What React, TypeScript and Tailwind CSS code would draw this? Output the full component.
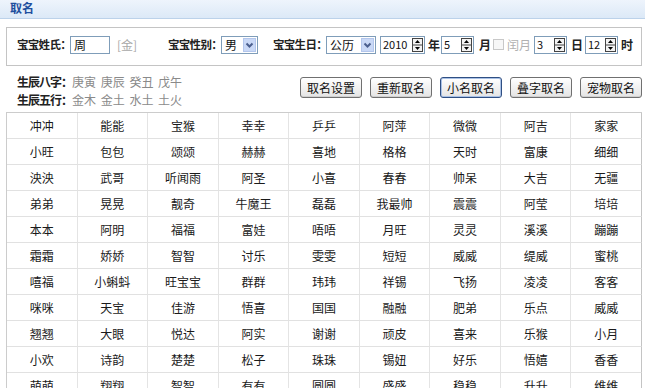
import React from "react";

const rows: string[][] = [
  ["冲冲", "能能", "宝猴", "幸幸", "乒乒", "阿萍", "微微", "阿吉", "家家"],
  ["小旺", "包包", "颂颂", "赫赫", "喜地", "格格", "天时", "富康", "细细"],
  ["泱泱", "武哥", "听闻雨", "阿圣", "小喜", "春春", "帅呆", "大吉", "无疆"],
  ["弟弟", "晃晃", "靓奇", "牛魔王", "磊磊", "我最帅", "震震", "阿莹", "培培"],
  ["本本", "阿明", "福福", "富娃", "唔唔", "月旺", "灵灵", "溪溪", "蹦蹦"],
  ["霜霜", "娇娇", "智智", "讨乐", "雯雯", "短短", "威威", "缇威", "蜜桃"],
  ["嘻福", "小蝌蚪", "旺宝宝", "群群", "玮玮", "祥锡", "飞扬", "凌凌", "客客"],
  ["咪咪", "天宝", "佳游", "悟喜", "国国", "融融", "肥弟", "乐点", "威威"],
  ["翘翘", "大眼", "悦达", "阿实", "谢谢", "顽皮", "喜来", "乐猴", "小月"],
  ["小欢", "诗韵", "楚楚", "松子", "珠珠", "锡妞", "好乐", "悟嬉", "香香"],
  ["萌萌", "翔翔", "智智", "有有", "圆圆", "盛盛", "稳稳", "升升", "维维"],
];

const font = { fontFamily: '"Noto Sans CJK SC", "Noto Sans", sans-serif' };

function Spinner() {
  return (
    <svg width="11" height="14" viewBox="0 0 11 14" className="shrink-0">
      <rect x="0.5" y="0.5" width="10" height="13" fill="#f3f3f3" stroke="#444" />
      <line x1="1" y1="7" x2="10" y2="7" stroke="#444" />
      <path d="M5.5 2 L8 5 H3 Z" fill="#000" />
      <path d="M5.5 12 L8 9 H3 Z" fill="#000" />
    </svg>
  );
}

function Arrow() {
  return (
    <svg width="13" height="14" viewBox="0 0 13 14" className="shrink-0">
      <rect x="0.5" y="0.5" width="12" height="13" fill="#c9d8f6" stroke="#b3c6ec" />
      <path d="M3.5 5.5 L6.5 8.5 L9.5 5.5" fill="none" stroke="#4b5f8e" strokeWidth="2" />
    </svg>
  );
}

function NumInput({ value, w, ml }: { value: string; w: string; ml: string }) {
  return (
    <div
      className={`${w} ${ml} shrink-0 h-[18px] border border-[#7f9db9] bg-white flex items-center justify-between pl-[2px] pr-[1px] text-[11px] text-[#111] leading-none`}
    >
      <span>{value}</span>
      <Spinner />
    </div>
  );
}

function Select({ value, w, ml }: { value: string; w: string; ml: string }) {
  return (
    <div
      className={`${w} ${ml} shrink-0 h-[18px] border border-[#7f9db9] bg-white flex items-center justify-between pl-[3px] pr-[1px] text-[12px] text-[#111] leading-none`}
    >
      <span>{value}</span>
      <Arrow />
    </div>
  );
}

function Btn({ label, active }: { label: string; active?: boolean }) {
  return (
    <div
      className={`w-[62px] h-[21px] rounded-[3px] flex items-center justify-center text-[12px] text-[#111] bg-gradient-to-b from-white to-[#e4e4e4] ${
        active
          ? "border border-[#2f4f83] shadow-[inset_0_0_0_1px_#a9c1e6]"
          : "border border-[#707070] shadow-[inset_0_-1px_0_#d0d0d0]"
      }`}
    >
      {label}
    </div>
  );
}

export default function App() {
  return (
    <div className="w-[645px] h-[388px] overflow-hidden bg-white" style={font}>
      <div className="h-[19px] bg-gradient-to-b from-[#eef4fc] to-[#dce9f7] border-b border-[#bcd2ea] pl-[10px] flex items-center">
        <span className="text-[12px] font-bold text-[#1f4f9e] leading-none -mt-[3px]">取名</span>
      </div>

      <div className="ml-[6px] w-[636px] mt-[8px] h-[39px] border border-[#c4c4c4] bg-white flex items-center pl-[10px] pb-[4px] text-[12px] leading-none whitespace-nowrap">
        <span className="w-[53px] shrink-0 font-bold text-[#222] text-[11.5px] tracking-[-0.7px]">宝宝姓氏：</span>
        <div className="w-[40px] shrink-0 h-[18px] border border-[#7f9db9] bg-white flex items-center pl-[3px] text-[12px] text-[#111]">周</div>
        <span className="ml-[7px] w-[51px] shrink-0 text-[#a8a8a8]">[金]</span>
        <span className="w-[53px] shrink-0 font-bold text-[#222] text-[11.5px] tracking-[-0.7px]">宝宝性别：</span>
        <Select value="男" w="w-[37px]" ml="ml-0" />
        <span className="ml-[15px] w-[53px] shrink-0 font-bold text-[#222] text-[11.5px] tracking-[-0.7px]">宝宝生日：</span>
        <Select value="公历" w="w-[50px]" ml="ml-0" />
        <NumInput value="2010" w="w-[45px]" ml="ml-[4px]" />
        <span className="ml-[3px] w-[12px] shrink-0 font-bold text-[#222]">年</span>
        <NumInput value="5" w="w-[33px]" ml="ml-[1px]" />
        <span className="ml-[5px] w-[12px] shrink-0 font-bold text-[#222]">月</span>
        <div className="ml-[2px] w-[11px] h-[11px] shrink-0 border border-[#c8c8c8] bg-[#f7f7f7]" />
        <span className="ml-[3px] w-[24px] shrink-0 text-[#b0b0b0]">闰月</span>
        <NumInput value="3" w="w-[33px]" ml="ml-[3px]" />
        <span className="ml-[4px] w-[12px] shrink-0 font-bold text-[#222]">日</span>
        <NumInput value="12" w="w-[33px]" ml="ml-[2px]" />
        <span className="ml-[3px] w-[12px] shrink-0 font-bold text-[#222]">时</span>
      </div>

      <div className="ml-[17px] mr-[3px] mt-[7px] flex items-start justify-between">
        <div className="text-[12px] leading-[18px] whitespace-nowrap">
          <div className="flex">
            <span className="w-[55px] font-bold text-[#222] tracking-[-1px]">生辰八字：</span>
            <span className="text-[#8a8a8a] [word-spacing:2px]">庚寅 庚辰 癸丑 戊午</span>
          </div>
          <div className="flex">
            <span className="w-[55px] font-bold text-[#222] tracking-[-1px]">生辰五行：</span>
            <span className="text-[#8a8a8a] [word-spacing:2px]">金木 金土 水土 土火</span>
          </div>
        </div>
        <div className="mt-[4px] flex gap-[8px]">
          <Btn label="取名设置" />
          <Btn label="重新取名" />
          <Btn label="小名取名" active />
          <Btn label="叠字取名" />
          <Btn label="宠物取名" />
        </div>
      </div>

      <div className="ml-[6px] w-[636px] mt-[3px] border-l border-t border-[#cccccc] grid grid-cols-9">
        {rows.map((r, i) =>
          r.map((c, j) => (
            <div
              key={`${i}-${j}`}
              className={`h-[26px] flex items-center justify-center border-b border-[#e1e1e1] text-[12px] text-[#1a1a1a] ${
                j === 8 ? "border-r border-r-[#c4c4c4]" : "border-r border-r-[#e4e4e4]"
              }`}
            >
              {c}
            </div>
          ))
        )}
      </div>
    </div>
  );
}
